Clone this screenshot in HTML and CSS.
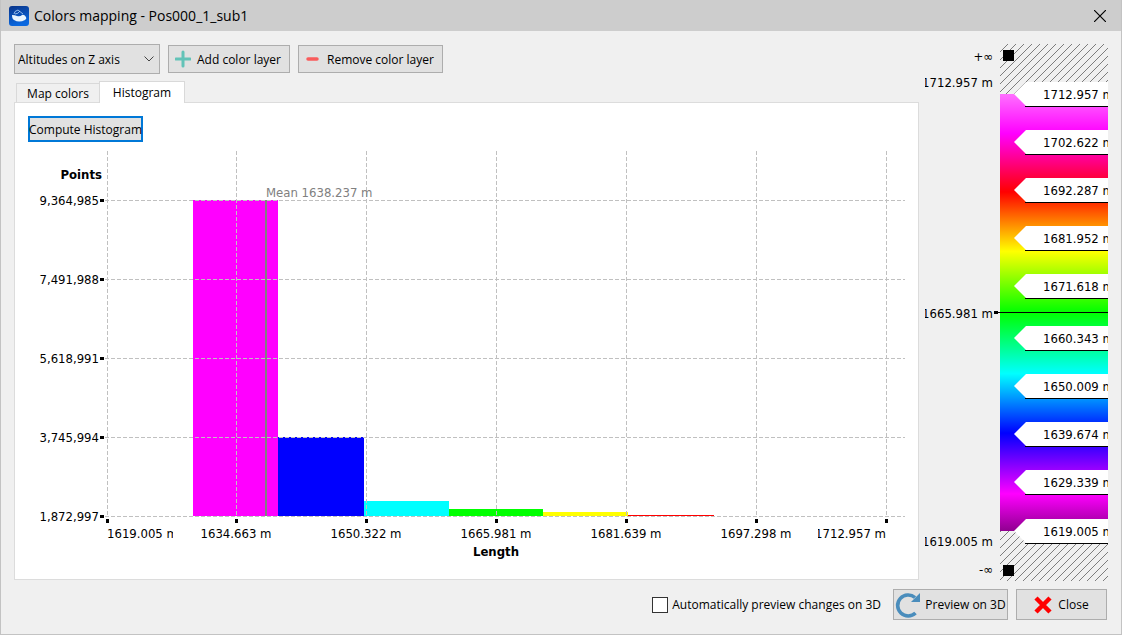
FILE: index.html
```html
<!DOCTYPE html>
<html lang="en">
<head>
    <meta charset="UTF-8">
    <meta name="viewport" content="width=device-width, initial-scale=1.0">
    <title>Colors mapping - Pos000_1_sub1</title>
    <link rel="stylesheet" href="styles.css">
</head>
<body>
    <header class="titlebar">
        <svg class="logo" width="20" height="20" viewBox="0 0 20 20">
            <defs>
                <linearGradient id="logo-bg" x1="0" y1="0" x2="0.3" y2="1">
                    <stop offset="0" stop-color="#0a3488"/>
                    <stop offset="1" stop-color="#0a68e0"/>
                </linearGradient>
            </defs>
            <rect width="20" height="20" rx="3" fill="url(#logo-bg)"/>
            <path d="M3 9 Q6 9 8 10 Q11 11 13 9 Q15 8 17 11 Q18 13 16 14 Q10 17 5 14 Q3 13 3 9 Z" fill="#eaf5ff"/>
            <path d="M5 8 Q5 5 9 4 L14 8 M6 8 Q9 8 11 5" fill="none" stroke="#b5d4f7" stroke-width="0.8"/>
        </svg>
        <h1>Colors mapping - Pos000_1_sub1</h1>
        <button class="window-close" aria-label="Close window">
            <svg width="12" height="12" viewBox="0 0 12 12"><path d="M0 0 L12 12 M12 0 L0 12" stroke="#000" stroke-width="1.2"/></svg>
        </button>
    </header>

    <main class="content">
        <section class="editor">
            <div class="toolbar">
                <div class="combo">
                    <select aria-label="Color source">
                        <option>Altitudes on Z axis</option>
                    </select>
                    <svg class="chevron" width="10" height="6" viewBox="0 0 10 6"><path d="M0.5 0.5 L5 5 L9.5 0.5" fill="none" stroke="#444"/></svg>
                </div>
                <button class="btn">
                    <svg width="16" height="18" viewBox="0 0 16 18"><path d="M8 2 V16 M1 9 H15" stroke="#63c3b8" stroke-width="3" stroke-linecap="round"/></svg>
                    Add color layer
                </button>
                <button class="btn">
                    <svg width="16" height="18" viewBox="0 0 16 18"><path d="M3 9 H12" stroke="#f95c5c" stroke-width="3.5" stroke-linecap="round"/></svg>
                    Remove color layer
                </button>
            </div>

            <nav class="tabs">
                <button class="tab">Map colors</button>
                <button class="tab active">Histogram</button>
            </nav>

            <div class="panel">
                <button class="btn compute">Compute Histogram</button>
                <svg class="histogram" viewBox="15 142 903 437">
                    <g shape-rendering="crispEdges">
                        <rect x="193" y="200" width="85" height="316" fill="#ff00ff"/>
                        <rect x="278" y="437" width="86" height="79" fill="#0000ff"/>
                        <rect x="364" y="501" width="85" height="15" fill="#00ffff"/>
                        <rect x="449" y="509" width="94" height="7" fill="#00ff00"/>
                        <rect x="543" y="512" width="85" height="4" fill="#ffff00"/>
                    </g>
                    <g class="grid" shape-rendering="crispEdges">
                        <path d="M105 200.5 H905 M105 279.5 H905 M105 358.5 H905 M105 437.5 H905 M105 516.5 H905"/>
                        <path d="M107.5 151 V516 M236.5 151 V516 M366.5 151 V516 M496.5 151 V516 M626.5 151 V516 M756.5 151 V516 M886.5 151 V516"/>
                    </g>
                    <g shape-rendering="crispEdges">
                        <rect x="628" y="515" width="86" height="1" fill="#ff0000"/>
                        <rect x="265" y="200" width="2" height="316" fill="#808080"/>
                        <path class="ticks" d="M100 200.5 h4 M100 279.5 h4 M100 358.5 h4 M100 437.5 h4 M100 516.5 h4"/>
                        <path class="ticks" d="M107.5 519 v4 M236.5 519 v4 M366.5 519 v4 M496.5 519 v4 M626.5 519 v4 M756.5 519 v4 M886.5 519 v4"/>
                    </g>
                    <g class="end">
                        <text class="axis" x="102" y="179">Points</text>
                        <text x="99" y="205">9,364,985</text>
                        <text x="99" y="284">7,491,988</text>
                        <text x="99" y="363">5,618,991</text>
                        <text x="99" y="442">3,745,994</text>
                        <text x="99" y="521">1,872,997</text>
                    </g>
                    <text class="mean" x="266" y="197">Mean 1638.237 m</text>
                    <clipPath id="x-labels">
                        <rect x="106" y="523" width="67" height="20"/>
                        <rect x="180" y="523" width="632" height="20"/>
                        <rect x="818" y="523" width="70" height="20"/>
                    </clipPath>
                    <g class="middle" clip-path="url(#x-labels)">
                        <text class="from-start" x="107" y="538">1619.005 m</text>
                        <text x="236" y="538">1634.663 m</text>
                        <text x="366" y="538">1650.322 m</text>
                        <text x="496" y="538">1665.981 m</text>
                        <text x="626" y="538">1681.639 m</text>
                        <text x="756" y="538">1697.298 m</text>
                        <text class="from-end" x="886" y="538">1712.957 m</text>
                    </g>
                    <text class="axis middle" x="496" y="556">Length</text>
                </svg>
            </div>
        </section>

        <svg class="scale" width="189" height="537" viewBox="919 44 189 537">
            <defs>
                <linearGradient id="ramp" x1="0" y1="0" x2="0" y2="1">
                    <stop offset="0" stop-color="#ff70ff"/>
                    <stop offset="0.09" stop-color="#ff00ff"/>
                    <stop offset="0.224" stop-color="#ff0000"/>
                    <stop offset="0.36" stop-color="#ffff00"/>
                    <stop offset="0.5" stop-color="#00ff00"/>
                    <stop offset="0.64" stop-color="#00ffff"/>
                    <stop offset="0.776" stop-color="#0000ff"/>
                    <stop offset="0.915" stop-color="#ff00ff"/>
                    <stop offset="1" stop-color="#900090"/>
                </linearGradient>
                <pattern id="hatch" x="4" y="0" width="8" height="8" patternUnits="userSpaceOnUse">
                    <path d="M-1 9 L9 -1" stroke="#707070" stroke-width="0.9"/>
                </pattern>
                <clipPath id="left-labels"><rect x="925" y="44" width="73" height="537"/></clipPath>
                <g id="flag">
                    <path d="M1014 0 L1026 -12 H1108 V12 H1026 Z" fill="#fff"/>
                    <path d="M1025 12.5 H1108" stroke="#000" shape-rendering="crispEdges"/>
                </g>
            </defs>
            <rect x="1000" y="44" width="108" height="50" fill="url(#hatch)"/>
            <rect x="1000" y="531" width="108" height="50" fill="url(#hatch)"/>
            <rect x="1000" y="94" width="108" height="437" fill="url(#ramp)"/>
            <path d="M998 312.5 H1108" stroke="#000" shape-rendering="crispEdges"/>
            <rect x="994" y="311" width="4" height="3"/>
            <rect x="1003" y="50" width="11" height="11"/>
            <rect x="1003" y="565" width="11" height="11"/>
            <use href="#flag" y="94"/>
            <use href="#flag" y="142"/>
            <use href="#flag" y="190"/>
            <use href="#flag" y="238"/>
            <use href="#flag" y="286"/>
            <use href="#flag" y="338"/>
            <use href="#flag" y="386"/>
            <use href="#flag" y="434"/>
            <use href="#flag" y="482"/>
            <use href="#flag" y="531"/>
            <text x="1043" y="99">1712.957 m</text>
            <text x="1043" y="147">1702.622 m</text>
            <text x="1043" y="195">1692.287 m</text>
            <text x="1043" y="243">1681.952 m</text>
            <text x="1043" y="291">1671.618 m</text>
            <text x="1043" y="343">1660.343 m</text>
            <text x="1043" y="391">1650.009 m</text>
            <text x="1043" y="439">1639.674 m</text>
            <text x="1043" y="487">1629.339 m</text>
            <text x="1043" y="536">1619.005 m</text>
            <g class="end" clip-path="url(#left-labels)">
                <text x="993" y="61">+∞</text>
                <text x="993" y="87">1712.957 m</text>
                <text x="993" y="318">1665.981 m</text>
                <text x="993" y="546">1619.005 m</text>
                <text x="993" y="574">-∞</text>
            </g>
        </svg>
    </main>

    <footer class="actions">
        <label class="check"><input type="checkbox"> Automatically preview changes on 3D</label>
        <button class="btn preview">
            <svg width="26" height="26" viewBox="0 0 26 26">
                <path d="M20.500 21 A10.500 10.500 0 1 1 20 5.500" fill="none" stroke="#4a8dbc" stroke-width="3.600"/>
                <path d="M25 1 V10 H16 Z" fill="#4a8dbc"/>
            </svg>
            Preview on 3D
        </button>
        <button class="btn close">
            <svg width="18" height="18" viewBox="0 0 18 18"><path d="M2 2 L16 16 M16 2 L2 16" stroke="#f00" stroke-width="4.500"/></svg>
            Close
        </button>
    </footer>
</body>
</html>
```
FILE: styles.css
```css
* {
    box-sizing: border-box;
}
body {
    margin: 0;
    min-height: 100vh;
    background: #f0f0f0;
    border: 1px solid #c3c3c3;
    border-top: 0;
    color: #000;
    font-family: "Open Sans", "Noto Sans", sans-serif;
    font-size: 12px;
}
svg {
    display: block;
    flex: none;
}
button, select, input {
    font: inherit;
    color: inherit;
    margin: 0;
}
.titlebar {
    display: flex;
    align-items: center;
    gap: 5px;
    height: 31px;
    padding: 0 15px 0 8px;
    background: #cdcdcd;
}
.titlebar h1 {
    flex: 1;
    margin: 0;
    font-size: 14px;
    font-weight: normal;
}
.window-close {
    padding: 0;
    border: 0;
    background: none;
}
.content {
    display: flex;
    padding: 13px 13px 0;
}
.editor {
    flex: 1;
    min-width: 0;
    display: flex;
    flex-direction: column;
}
.toolbar {
    display: flex;
    align-items: center;
    gap: 8px;
}
.combo {
    position: relative;
}
.combo select {
    display: block;
    width: 146px;
    height: 30px;
    padding: 0 3px;
    appearance: none;
    background: #e1e1e1;
    border: 1px solid #adadad;
    border-radius: 0;
}
.chevron {
    position: absolute;
    right: 6px;
    top: 12px;
    pointer-events: none;
}
.btn {
    display: flex;
    align-items: center;
    justify-content: center;
    gap: 6px;
    height: 28px;
    padding: 0 8px 0 6px;
    background: #e1e1e1;
    border: 1px solid #adadad;
    white-space: nowrap;
}
.tabs {
    display: flex;
    align-items: flex-end;
    height: 28px;
    padding-left: 2px;
}
.tab {
    height: 19px;
    width: 84px;
    padding: 0;
    background: #f0f0f0;
    border: 1px solid #d9d9d9;
    border-bottom: 0;
}
.tab.active {
    position: relative;
    height: 22px;
    width: 86px;
    margin: 0 0 -1px -1px;
    background: #fff;
}
.panel {
    background: #fff;
    border: 1px solid #dcdcdc;
    padding-top: 13px;
}
.compute {
    width: 115px;
    height: 26px;
    margin-left: 13px;
    padding: 0;
    border: 2px solid #0078d7;
}
.histogram {
    width: 100%;
    height: auto;
}
.histogram text, .scale text {
    font-family: "DejaVu Sans Condensed", "DejaVu Sans", sans-serif;
    font-stretch: condensed;
    font-size: 13px;
}
.grid {
    fill: none;
    stroke: #c0c0c0;
    stroke-dasharray: 4 2;
}
.ticks {
    fill: none;
    stroke: #000;
    stroke-width: 3;
}
.histogram .axis {
    font-weight: bold;
}
.histogram .mean {
    fill: #808080;
}
.end, .histogram .from-end {
    text-anchor: end;
}
.middle {
    text-anchor: middle;
}
.from-start {
    text-anchor: start;
}
.actions {
    display: flex;
    justify-content: flex-end;
    align-items: center;
    gap: 8px;
    padding: 8px 14px 14px;
}
.check {
    display: flex;
    align-items: center;
    gap: 4px;
    margin-right: 4px;
}
.check input {
    appearance: none;
    width: 16px;
    height: 16px;
    background: #fff;
    border: 1px solid #333;
}
.preview {
    width: 115px;
    height: 31px;
    padding: 0 2px;
    gap: 4px;
}
.close {
    width: 91px;
    height: 31px;
    padding: 0 2px;
}
```
